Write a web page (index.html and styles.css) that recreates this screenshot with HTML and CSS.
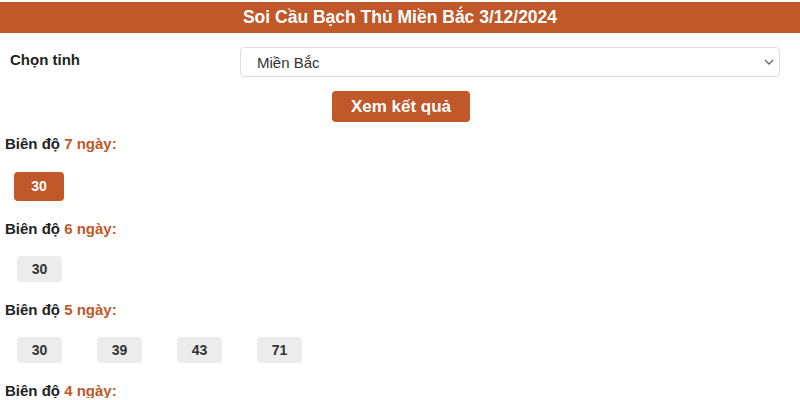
FILE: index.html
```html
<!DOCTYPE html>
<html lang="vi">
<head>
    <meta charset="UTF-8">
    <meta name="viewport" content="width=device-width, initial-scale=1.0">
    <title>Soi Cầu Bạch Thủ Miền Bắc</title>
    <link rel="stylesheet" href="styles.css">
</head>
<body>

    <div class="title">Soi Cầu Bạch Thủ Miền Bắc 3/12/2024</div>

    <form class="filter">
        <div class="row">
            <label for="province">Chọn tỉnh</label>
            <div class="select-wrap">
                <select id="province">
                    <option>Miền Bắc</option>
                    <option>Miền Trung</option>
                    <option>Miền Nam</option>
                </select>
                <svg class="caret" width="10" height="6" viewBox="0 0 10 6"><path d="M1 1l4 4 4-4" fill="none" stroke="#666" stroke-width="1.3"/></svg>
            </div>
        </div>
        <div class="actions">
            <button type="button" class="button">Xem kết quả</button>
        </div>
    </form>

    <div class="result">
        <h4>Biên độ <span>7 ngày:</span></h4>
        <div class="nums">
            <span class="num active">30</span>
        </div>

        <h4>Biên độ <span>6 ngày:</span></h4>
        <div class="nums">
            <span class="num">30</span>
        </div>

        <h4>Biên độ <span>5 ngày:</span></h4>
        <div class="nums">
            <span class="num">30</span>
            <span class="num">39</span>
            <span class="num">43</span>
            <span class="num">71</span>
        </div>

        <h4>Biên độ <span>4 ngày:</span></h4>
    </div>

</body>
</html>
```

FILE: styles.css
```css
body { margin: 0; font-family: "Liberation Sans", Arial, sans-serif; color: #222; background: #fff; }
.title { margin-top: 2px; height: 31px; line-height: 31px; background: #c05829; color: #fff; text-align: center; font-weight: bold; font-size: 17.5px; }
.filter { padding: 0 20px 0 10px; }
.row { display: flex; align-items: center; margin-top: 14px; }
.row label { width: 230px; font-weight: bold; font-size: 15px; line-height: 16px; margin-top: -5px; }
.select-wrap { position: relative; flex: 1; }
.select-wrap select { width: 100%; height: 30px; padding: 0 16px; border: 1px solid #ddd; border-radius: 4px; background: #fff; font-family: inherit; font-size: 15px; color: #333; appearance: none; }
.caret { position: absolute; right: 6px; top: 12px; }
.actions { text-align: center; margin-top: 14px; padding-left: 12px; }
.button { background: #c05829; color: #fff; border: none; border-radius: 4px; width: 138px; height: 31px; font-family: inherit; font-weight: bold; font-size: 17px; cursor: pointer; }
.result { padding: 0 5px; }
.result h4 { margin: 0; font-size: 15px; line-height: 15px; font-weight: bold; color: #222; }
.result h4 span { color: #c05829; }
.result h4:first-child { margin-top: 14px; }
.nums { display: flex; gap: 35px; padding: 20px 0 20px 12px; }
.num { width: 45px; height: 26px; line-height: 26px; text-align: center; background: #ececec; border-radius: 4px; font-weight: bold; font-size: 14px; color: #333; }
.num.active { width: 50px; height: 29px; line-height: 29px; margin: 1px 0 0 -3px; background: #c05829; color: #fff; }
```
